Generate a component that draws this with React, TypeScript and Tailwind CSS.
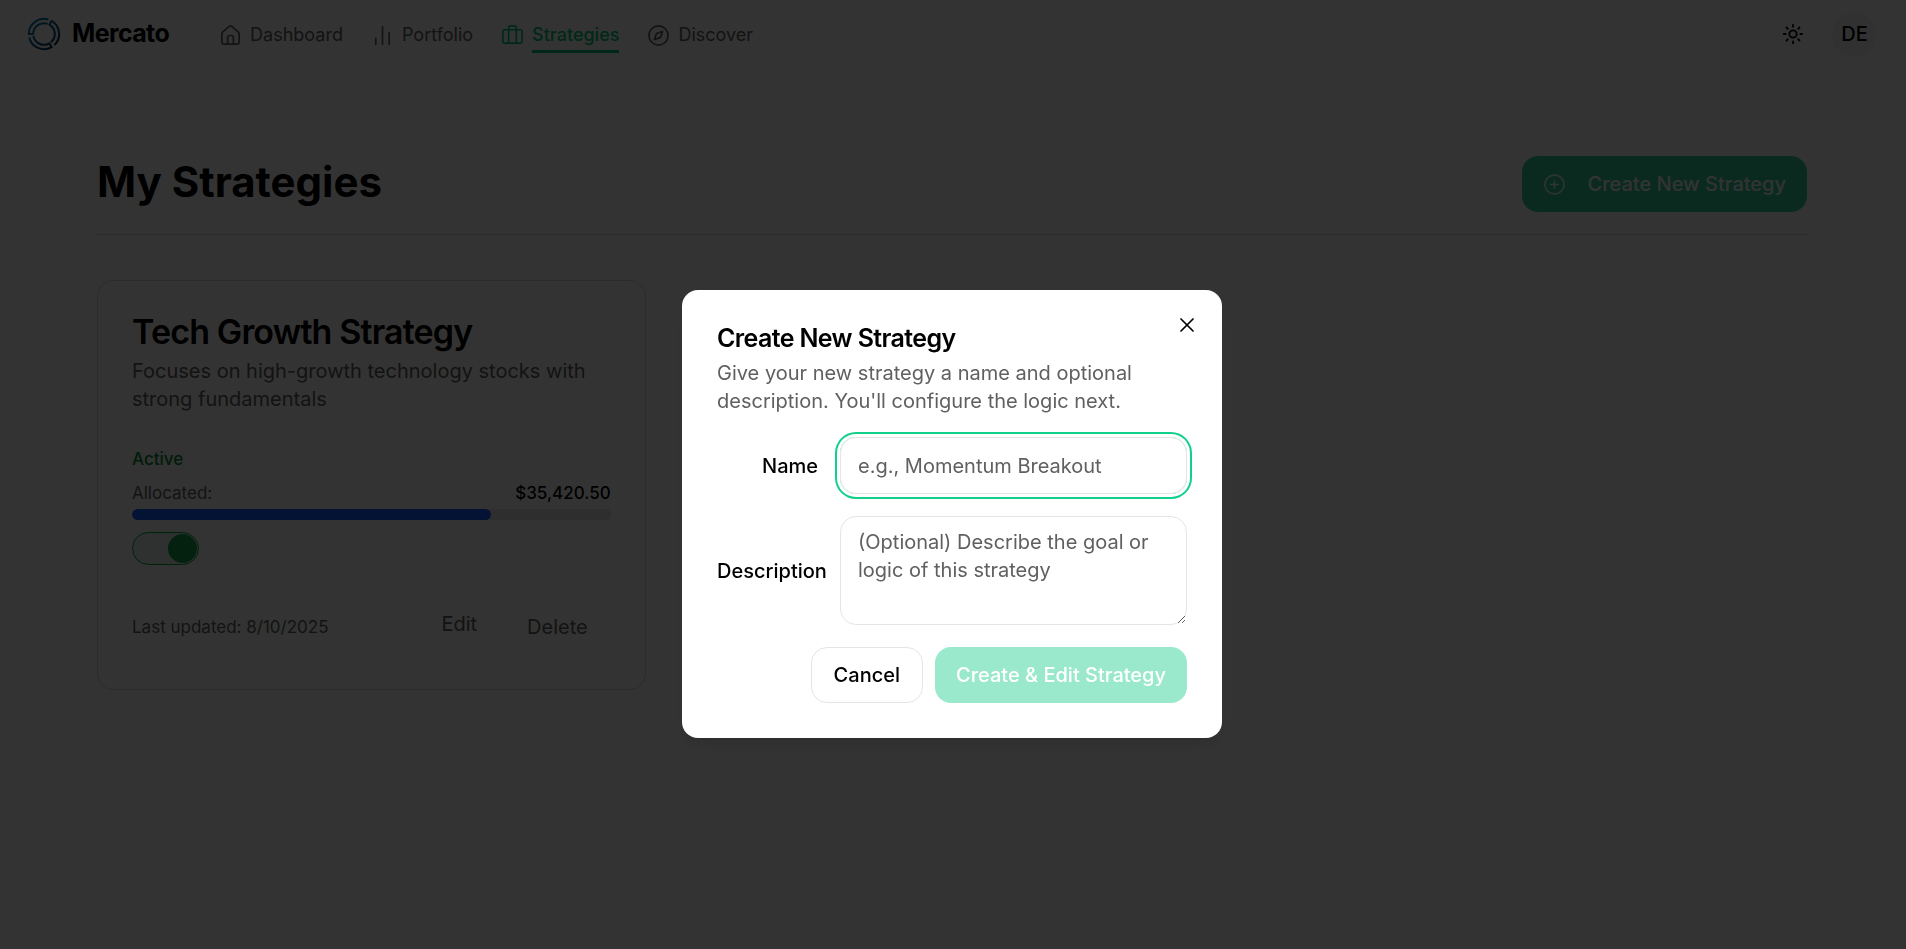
import { useState } from "react";
import type { ReactNode } from "react";

function Icon({ size, stroke, className, children }: { size: number; stroke: number; className?: string; children: ReactNode }) {
  return (
    <svg
      width={size}
      height={size}
      viewBox="0 0 24 24"
      fill="none"
      stroke="currentColor"
      strokeWidth={stroke}
      strokeLinecap="round"
      strokeLinejoin="round"
      aria-hidden="true"
      className={className}
    >
      {children}
    </svg>
  );
}

function Logo() {
  const segment = "M21.4 2.5A15.2 15.2 0 0 0 1.8 17H6.2A10.8 10.8 0 0 1 20.7 6.9";
  return (
    <svg width="34" height="34" viewBox="0 0 34 34" fill="none" aria-hidden="true">
      <defs>
        <linearGradient id="logo" gradientUnits="userSpaceOnUse" x1="4" y1="4" x2="30" y2="30">
          <stop offset="0" stopColor="#0e84c4" />
          <stop offset="1" stopColor="#04263f" />
        </linearGradient>
        <mask id="logo-mask" maskUnits="userSpaceOnUse" x="0" y="0" width="34" height="34">
          <g stroke="white" strokeWidth="2" strokeLinejoin="round">
            <path d={segment} />
            <path d={segment} transform="rotate(120 17 17)" />
            <path d={segment} transform="rotate(240 17 17)" />
          </g>
        </mask>
      </defs>
      <rect width="34" height="34" fill="url(#logo)" mask="url(#logo-mask)" />
    </svg>
  );
}

const navItems = [
  {
    label: "Dashboard",
    icon: (
      <>
        <path d="M15 21v-7a2 2 0 0 0-2-2h-2a2 2 0 0 0-2 2v7" />
        <path d="M3 10a2 2 0 0 1 .709-1.528l7-6a2 2 0 0 1 2.582 0l7 6A2 2 0 0 1 21 10v9a2 2 0 0 1-2 2H5a2 2 0 0 1-2-2z" />
      </>
    ),
  },
  { label: "Portfolio", icon: <path d="M5 21v-6M12 21V3M19 21V9" /> },
  {
    label: "Strategies",
    active: true,
    icon: (
      <>
        <path d="M16 20V4a2 2 0 0 0-2-2h-4a2 2 0 0 0-2 2v16" />
        <rect x="2" y="6" width="20" height="14" rx="2" />
      </>
    ),
  },
  {
    label: "Discover",
    icon: (
      <>
        <path d="m16.24 7.76-1.804 5.411a2 2 0 0 1-1.265 1.265L7.76 16.24l1.804-5.411a2 2 0 0 1 1.265-1.265z" />
        <circle cx="12" cy="12" r="10" />
      </>
    ),
  },
];

function Header() {
  return (
    <header className="flex h-[68px] items-center justify-between pr-[29px] pl-[27px]">
      <div className="flex items-center">
        <a href="#" className="flex items-center gap-[11px] text-[25px] font-bold tracking-tight">
          <Logo />
          Mercato
        </a>
        <nav className="mt-0.5 ml-[50px] flex items-center gap-7">
          {navItems.map((item) => (
            <a
              key={item.label}
              href="#"
              className={
                item.active
                  ? "flex items-center gap-2 text-lg font-medium text-[#00c777]"
                  : "flex items-center gap-2 text-lg text-[#606060]"
              }
            >
              <Icon size={23} stroke={1.75}>
                {item.icon}
              </Icon>
              <span className={item.active ? "-mb-1 border-b-3 border-[#00c777] pb-px" : ""}>{item.label}</span>
            </a>
          ))}
        </nav>
      </div>
      <div className="flex items-center gap-7">
        <button type="button" aria-label="Toggle theme">
          <Icon size={22} stroke={2}>
            <circle cx="12" cy="12" r="4" />
            <path d="M12 2v2M12 20v2M4.93 4.93l1.41 1.41M17.66 17.66l1.41 1.41M2 12h2M20 12h2M6.34 17.66l-1.41 1.41M19.07 4.93l-1.41 1.41" />
          </Icon>
        </button>
        <button type="button" className="size-[45px] rounded-full bg-[#f5f5f5] text-xl font-medium">
          DE
        </button>
      </div>
    </header>
  );
}

function StrategyCard() {
  const [active, setActive] = useState(true);
  return (
    <article className="rounded-2xl border border-[#d8d8d8] px-[34px] pt-[30px] pb-[45px]">
      <h2 className="text-[34px] leading-[42px] font-semibold tracking-tight">Tech Growth Strategy</h2>
      <p className="mt-1 text-xl text-[#606060]">Focuses on high-growth technology stocks with strong fundamentals</p>
      <p className="mt-8 text-[17px] leading-7 font-medium text-[#008a35]">Active</p>
      <div className="mt-1.5 flex justify-between text-[17px] leading-7">
        <span className="text-[#606060]">Allocated:</span>
        <span className="font-medium">$35,420.50</span>
      </div>
      <div className="mt-0.5 h-[11px] overflow-hidden rounded-full bg-[#e5e5e5]">
        <div className="h-full w-3/4 rounded-full bg-[#155dfc]" />
      </div>
      <label
        className={
          active
            ? "mt-3 flex h-[33px] w-[67px] items-center justify-end rounded-full border border-[#00a63e] bg-[#e6f5ec] px-px"
            : "mt-3 flex h-[33px] w-[67px] items-center justify-start rounded-full border border-[#d8d8d8] bg-[#f5f5f5] px-px"
        }
      >
        <input
          type="checkbox"
          aria-label="Strategy active"
          className="sr-only"
          checked={active}
          onChange={(e) => setActive(e.target.checked)}
        />
        <span className="size-[29px] rounded-full bg-[#16a34a]" />
      </label>
      <div className="mt-[45px] flex items-center">
        <span className="grow text-[17px] leading-7 text-[#606060]">Last updated: 8/10/2025</span>
        <a href="#" className="pb-1.5 text-xl text-[#606060]">Edit</a>
        <button type="button" className="mr-[23px] ml-[50px] text-xl text-[#606060]">Delete</button>
      </div>
    </article>
  );
}

function CreateDialog() {
  return (
    <div className="fixed inset-0 flex items-center justify-center bg-black/80 pt-[79px] pr-0.5">
      <section
        role="dialog"
        aria-modal="true"
        aria-labelledby="dialog-title"
        className="relative w-[540px] rounded-2xl bg-white p-[35px] shadow-lg"
      >
        <h2 id="dialog-title" className="text-[25px] leading-[26px] font-semibold tracking-tight">
          Create New Strategy
        </h2>
        <p className="mt-2 text-xl text-[#606060]">
          Give your new strategy a name and optional description. You'll configure the logic next.
        </p>
        <form onSubmit={(e) => e.preventDefault()}>
          <div className="mt-[22px] grid grid-cols-4 items-center gap-[22px]">
            <label htmlFor="name" className="text-right text-xl font-medium">Name</label>
            <input
              id="name"
              placeholder="e.g., Momentum Breakout"
              className="col-span-3 h-[57px] w-full rounded-2xl border border-[#e5e5e5] px-[17px] text-xl ring-2 ring-[#10d08c] ring-offset-3 outline-none placeholder:text-[#606060]"
            />
            <label htmlFor="description" className="text-right text-xl font-medium">Description</label>
            <textarea
              id="description"
              placeholder="(Optional) Describe the goal or logic of this strategy"
              className="col-span-3 h-[109px] w-full resize-y rounded-2xl border border-[#e5e5e5] px-[17px] py-[11px] text-xl outline-none placeholder:text-[#606060]"
            />
          </div>
          <div className="mt-[22px] flex justify-end gap-3">
            <button type="button" className="h-14 rounded-2xl border border-[#e5e5e5] px-[22px] text-xl font-medium">
              Cancel
            </button>
            <button type="submit" disabled className="h-14 rounded-2xl bg-[#9ae9cd] px-[21px] text-xl font-medium text-white">
              Create &amp; Edit Strategy
            </button>
          </div>
        </form>
        <button type="button" aria-label="Close" className="absolute top-[23px] right-[23px]">
          <Icon size={24} stroke={1.75}>
            <path d="M18 6 6 18M6 6l12 12" />
          </Icon>
        </button>
      </section>
    </div>
  );
}

export default function App() {
  return (
    <div className="min-h-screen bg-white font-['Inter',sans-serif] text-black">
      <Header />
      <main className="pt-[88px] pr-[99px] pl-[97px]">
        <div className="flex items-center justify-between border-b border-[#d8d8d8] pb-[22px]">
          <h1 className="pb-1 text-[42px] leading-[52px] font-bold">My Strategies</h1>
          <button type="button" className="flex h-14 items-center gap-[22px] rounded-2xl bg-[#35d39b] px-[21px] text-xl font-medium text-white">
            <Icon size={23} stroke={1.5}>
              <circle cx="12" cy="12" r="10" />
              <path d="M8 12h8M12 8v8" />
            </Icon>
            Create New Strategy
          </button>
        </div>
        <div className="mt-[45px] grid grid-cols-3 gap-8">
          <StrategyCard />
        </div>
      </main>
      <CreateDialog />
    </div>
  );
}
